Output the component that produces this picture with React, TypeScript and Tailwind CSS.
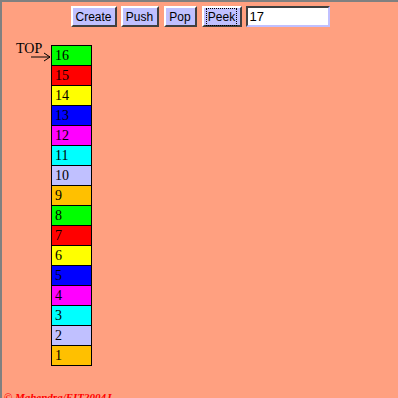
import React from "react";

const cells = [
  { n: 16, c: "bg-[#00ff00]" },
  { n: 15, c: "bg-[#ff0000]" },
  { n: 14, c: "bg-[#ffff00]" },
  { n: 13, c: "bg-[#0000ff]" },
  { n: 12, c: "bg-[#ff00ff]" },
  { n: 11, c: "bg-[#00ffff]" },
  { n: 10, c: "bg-[#c0c0ff]" },
  { n: 9, c: "bg-[#ffc000]" },
  { n: 8, c: "bg-[#00ff00]" },
  { n: 7, c: "bg-[#ff0000]" },
  { n: 6, c: "bg-[#ffff00]" },
  { n: 5, c: "bg-[#0000ff]" },
  { n: 4, c: "bg-[#ff00ff]" },
  { n: 3, c: "bg-[#00ffff]" },
  { n: 2, c: "bg-[#c0c0ff]" },
  { n: 1, c: "bg-[#ffc000]" },
];

function Btn({ label, w, focus }: { label: string; w: string; focus?: boolean }) {
  return (
    <button
      className={`${w} h-[21px] bg-[#c0c0ff] border-2 border-t-white border-l-white border-r-[#404040] border-b-[#404040] text-[12px] leading-none text-black p-0 flex items-center justify-center`}
      style={{ fontFamily: '"Liberation Sans", Arial, sans-serif' }}
    >
      <span className={focus ? "outline-1 outline-dotted outline-black px-[1px] py-[2px]" : ""}>{label}</span>
    </button>
  );
}

export default function App() {
  return (
    <div
      className="w-[398px] h-[398px] bg-[#ffa080] border-t-2 border-l-2 border-[#808080] overflow-hidden flex flex-col"
      style={{ fontFamily: '"Liberation Serif", "Times New Roman", serif' }}
    >
      <div className="flex justify-center pt-[4px]">
        <div className="flex items-center">
          <Btn label="Create" w="w-[46px]" />
          <div className="w-[4px]" />
          <Btn label="Push" w="w-[38px]" />
          <div className="w-[5px]" />
          <Btn label="Pop" w="w-[33px]" />
          <div className="w-[5px]" />
          <Btn label="Peek" w="w-[40px]" focus />
          <div className="w-[4px]" />
          <div
            className="w-[84px] h-[21px] bg-white border-2 border-t-[#404040] border-l-[#404040] border-r-[#c0c0ff] border-b-[#c0c0ff] flex items-center pl-[2px] text-[13px] text-black"
            style={{ fontFamily: '"Liberation Sans", Arial, sans-serif' }}
          >
            17
          </div>
        </div>
      </div>
      <div className="flex mt-[18px]">
        <div className="w-[49px] relative">
          <div className="absolute left-[14px] top-[-3px] text-[14px] leading-none text-black">TOP</div>
          <svg className="absolute left-[29px] top-[7px]" width="20" height="10" viewBox="0 0 20 10">
            <line x1="0" y1="5" x2="19" y2="5" stroke="black" strokeWidth="1" />
            <polyline points="13,1 19,5 13,9" fill="none" stroke="black" strokeWidth="1" />
          </svg>
        </div>
        <div className="flex flex-col w-[41px] border-l border-r border-black">
          {cells.map((cell, i) => (
            <div
              key={cell.n}
              className={`${cell.c} border-t border-black ${i === cells.length - 1 ? "border-b h-[21px]" : "h-[20px]"} pl-[3px] text-[14px] leading-[20px] text-black`}
            >
              {cell.n}
            </div>
          ))}
        </div>
      </div>
      <div className="mt-[26px] pl-[2px] text-[11px] font-bold italic text-[#ff0000] leading-none">
        © Mahendra/EIT2004J
      </div>
    </div>
  );
}
